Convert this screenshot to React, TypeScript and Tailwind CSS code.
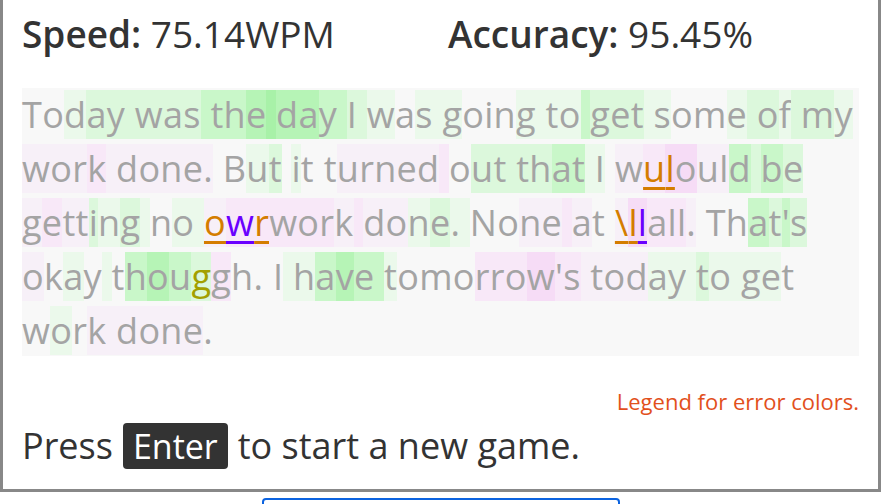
import React from "react";

const FONT = { fontFamily: '"Open Sans", "Noto Sans", sans-serif' };

const BG: Record<string, string> = {
  ".": "",
  a: "bg-[#ebf9eb]",
  b: "bg-[#dcf8dc]",
  c: "bg-[#c9f7c9]",
  d: "bg-[#b6f4b6]",
  e: "bg-[#a8f1a8]",
  p: "bg-[#f7f0f8]",
  q: "bg-[#f8e8f8]",
  r: "bg-[#f6dcf6]",
};

const ERR: Record<string, string> = {
  o: "text-[#d47d00] underline decoration-[3px] underline-offset-[5px] decoration-[#d47d00]",
  v: "text-[#6a00ff] underline decoration-[3px] underline-offset-[5px] decoration-[#6a00ff]",
  y: "text-[#a3a000]",
};

type Line = { text: string; bg: string; err?: [string, number, string][] };

// bg codes line up with the text, one per character
const LINES: Line[] = [
  {
    text: "Today was the day I was going to get some of my",
    bg: "..abbbbbbcccdeddccbba.aaa...aaaacbbbaa..abbabba..q",
  },
  {
    text: "work done. But it turned out that I wulould be",
    bg: "pppqpppppp..ab.a...pppppq.bbbbbccaa.pqrrppcbcbp",
    err: [["wulould", 1, "oo"]],
  },
  {
    text: "getting no owrwork done. None at \\llall. That's",
    bg: "pqppbaba.aapqqqqqpqppabaa..ppqp..prrqqqp...cbcb.a",
    err: [
      ["owrwork", 0, "ovo"],
      ["\\llall", 0, "oov"],
    ],
  },
  {
    text: "okay thouggh. I have tomorrow's today to get",
    bg: "p.a.a.cdcbq....aacdcca...qqqrqqppppaaabaaaa.",
    err: [["thouggh", 4, "y"]],
  },
  { text: "work done.", bg: ".a.pppppp." },
];

function TypedLine({ line }: { line: Line }) {
  const errs: string[] = Array(line.text.length).fill("");
  line.err?.forEach(([word, off, codes]) => {
    const at = line.text.indexOf(word) + off;
    codes.split("").forEach((c, i) => (errs[at + i] = c));
  });
  return (
    <div className="whitespace-pre">
      {line.text.split("").map((ch, i) => (
        <span key={i} className={`${BG[line.bg[i] ?? "."] ?? ""} ${errs[i] ? ERR[errs[i]] : ""}`}>
          {ch}
        </span>
      ))}
    </div>
  );
}

export default function App() {
  return (
    <div className="bg-white w-[886px] h-[504px] overflow-hidden" style={FONT}>
      <div className="w-[881px] border-x-[3px] border-b-[3px] border-[#888] px-[19px]">
        <div className="flex h-[88px] items-start pt-[10px] text-[37px] leading-[48px] text-[#333]">
          <div className="w-[426px] whitespace-nowrap">
            <span className="font-semibold">Speed:</span> 75.14WPM
          </div>
          <div className="whitespace-nowrap">
            <span className="font-semibold">Accuracy:</span> 95.45%
          </div>
        </div>
        <div className="bg-[#f8f8f8] text-[36px] leading-[54px] tracking-[0.3px] text-[#a4a4a4] h-[268px]">
          {LINES.map((l, i) => (
            <TypedLine key={i} line={l} />
          ))}
        </div>
        <div className="flex justify-end pt-[31px] text-[22px] leading-[28px] text-[#e2501c]">
          Legend for error colors.
        </div>
        <div className="h-[74px] pt-[8px]">
          <div className="flex items-center h-[46px] text-[36px] text-[#333] whitespace-nowrap">
            Press
            <kbd
              className="mx-[10px] px-[10px] h-[46px] leading-[46px] text-[34px] rounded-[4px] bg-[#333] text-white"
              style={FONT}
            >
              Enter
            </kbd>
            to start a new game.
          </div>
        </div>
      </div>
      <div className="ml-[262px] mt-[6px] w-[358px] h-[20px] rounded-[4px] border-2 border-[#0b63e0]" />
    </div>
  );
}
